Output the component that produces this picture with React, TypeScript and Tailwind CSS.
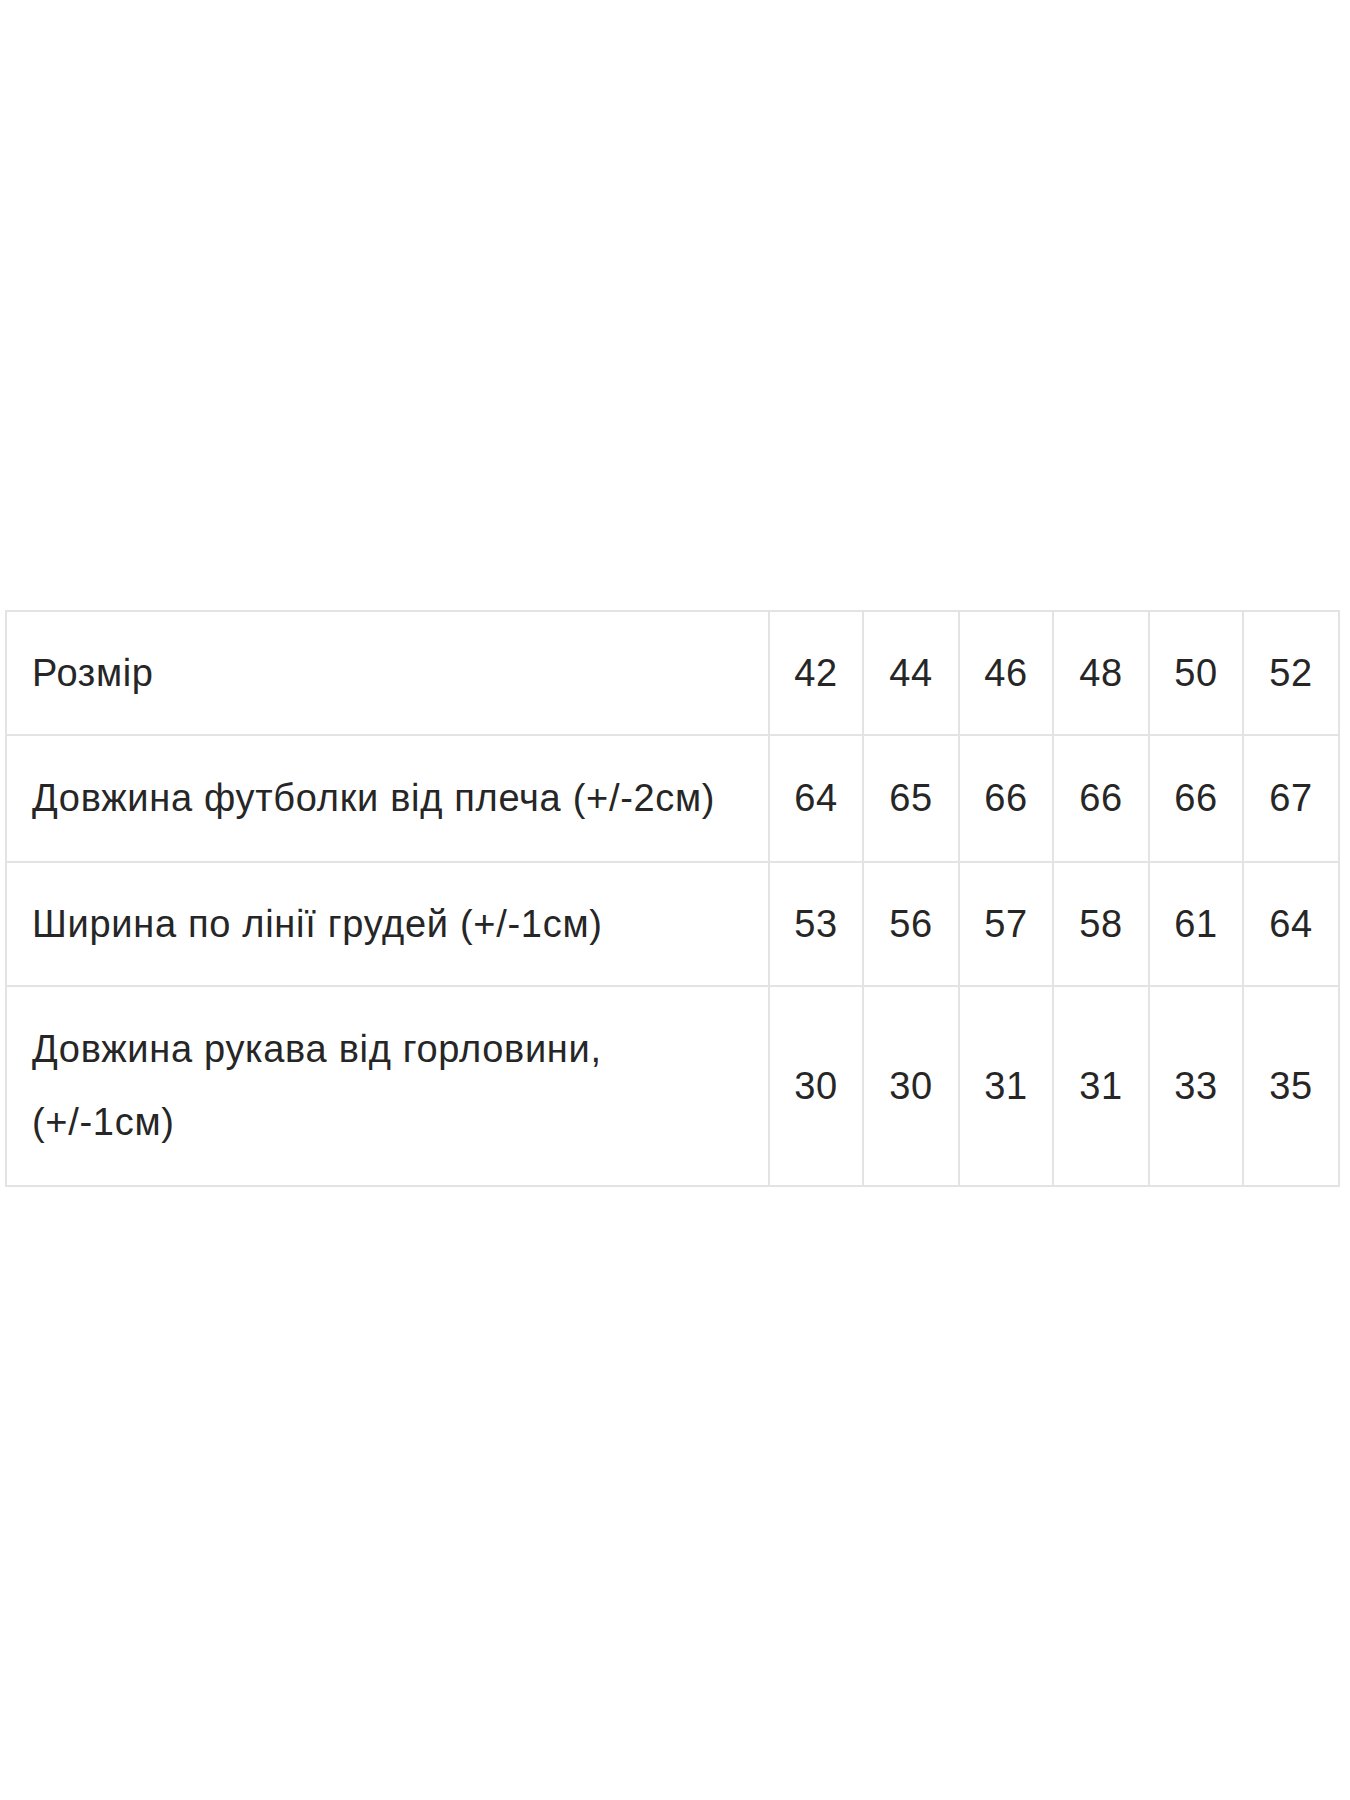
import React from "react";

const sizes = ["42", "44", "46", "48", "50", "52"];
const rows: { label: React.ReactNode; values: string[]; py: string }[] = [
  { label: "Довжина футболки від плеча (+/-2см)", values: ["64", "65", "66", "66", "66", "67"], py: "py-[26px]" },
  { label: "Ширина по лінії грудей (+/-1см)", values: ["53", "56", "57", "58", "61", "64"], py: "py-[24.5px]" },
  {
    label: (
      <>
        Довжина рукава від горловини,
        <br />
        (+/-1см)
      </>
    ),
    values: ["30", "30", "31", "31", "33", "35"],
    py: "py-[26px]",
  },
];
const colW = ["w-[94px]", "w-[96px]", "w-[94px]", "w-[96px]", "w-[94px]", "w-[96px]"];

export default function App() {
  return (
    <div
      className="w-[1350px] h-[1800px] bg-white pt-[610px] pl-[5px]"
      style={{ fontFamily: '"Liberation Sans", Arial, sans-serif' }}
    >
      <table className="table-fixed border-collapse w-[1333px] text-[38px] leading-[73px] tracking-[0.7px] text-[#262626]">
        <colgroup>
          <col className="w-[763px]" />
          {colW.map((c, i) => (
            <col key={i} className={c} />
          ))}
        </colgroup>
        <tbody>
          <tr>
            <td className="border-2 border-[#e3e3e3] px-[25px] py-[24.5px] align-middle">Розмір</td>
            {sizes.map((s) => (
              <td key={s} className="border-2 border-[#e3e3e3] py-[24.5px] text-center align-middle">
                {s}
              </td>
            ))}
          </tr>
          {rows.map((r, ri) => (
            <tr key={ri}>
              <td className={`border-2 border-[#e3e3e3] px-[25px] align-middle ${r.py}`}>{r.label}</td>
              {r.values.map((v, i) => (
                <td key={i} className={`border-2 border-[#e3e3e3] text-center align-middle ${r.py}`}>
                  {v}
                </td>
              ))}
            </tr>
          ))}
        </tbody>
      </table>
    </div>
  );
}
